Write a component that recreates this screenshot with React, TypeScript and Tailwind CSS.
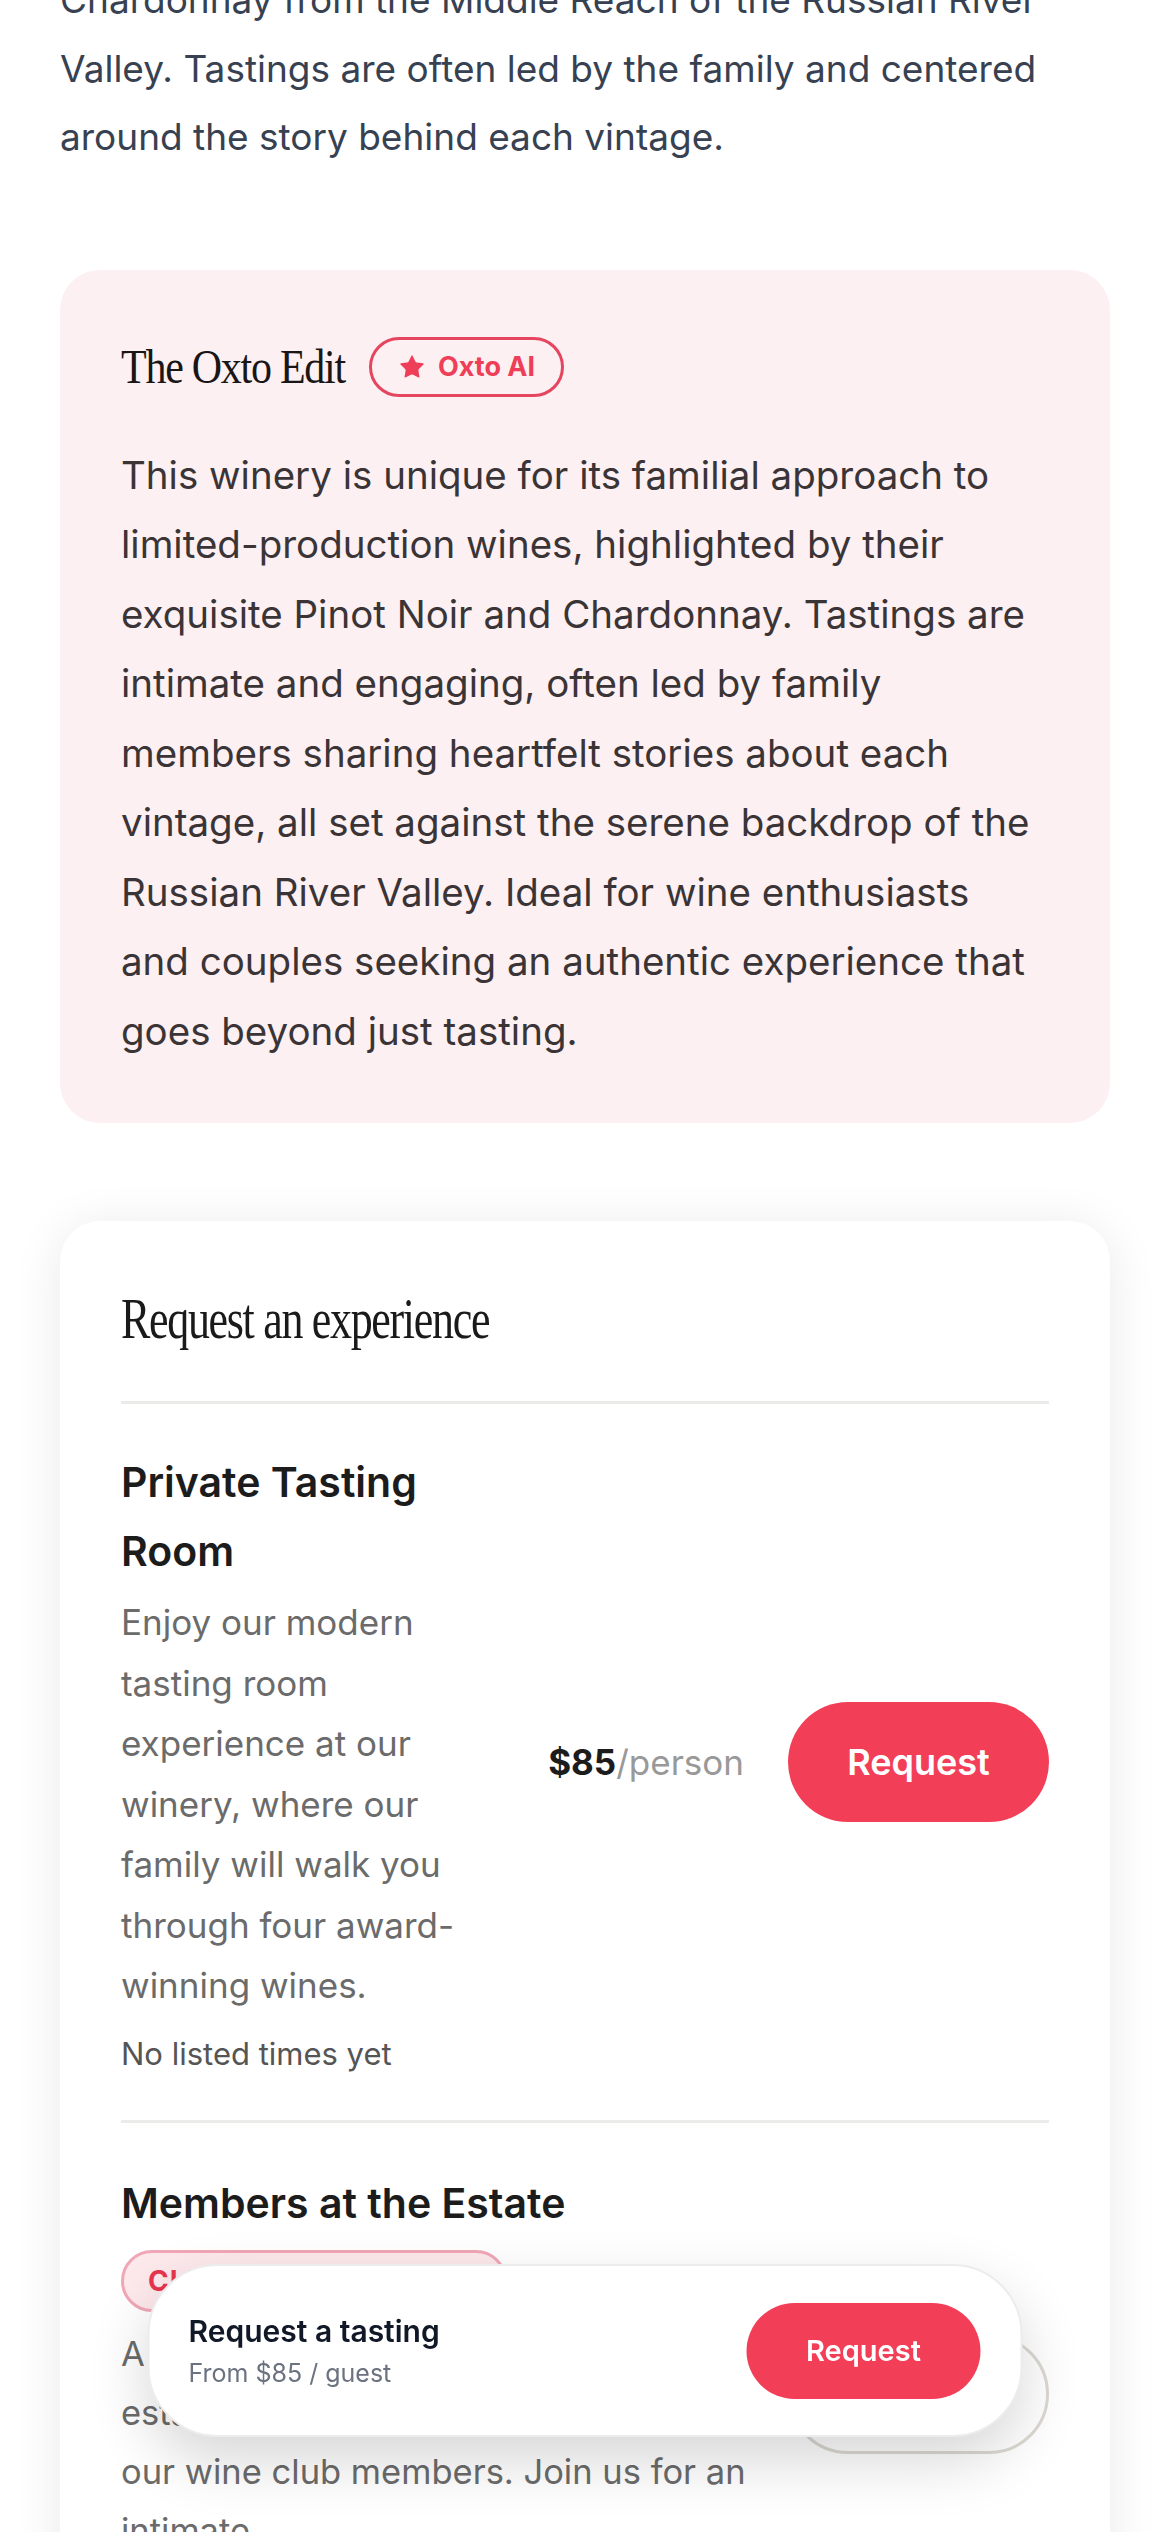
import { Star } from "lucide-react";

function RequestButton({ outline = false }: { outline?: boolean }) {
  return (
    <button
      className={`h-[120px] w-[261px] shrink-0 rounded-full text-[36px] font-semibold ${
        outline
          ? "border-[3px] border-[#dcd8d2] bg-white text-[#1c1c1c]"
          : "bg-[#f23f57] text-white"
      }`}
    >
      Request
    </button>
  );
}

export default function App() {
  return (
    <div className="min-h-[2532px] overflow-hidden bg-white pb-[300px] font-[Inter,'Noto_Sans',sans-serif]">
      {/* About text (scrolled) */}
      <p className="-mt-[34px] px-[60px] text-[37px] leading-[68.6px] text-[#374151]">
        Chardonnay from the Middle Reach of the Russian River Valley. Tastings are often led by the
        family and centered around the story behind each vintage.
      </p>

      {/* The Oxto Edit */}
      <section className="mx-[60px] mt-[98px] rounded-[40px] bg-[#fcf0f2] px-[61px] pb-[57px] pt-[67px]">
        <div className="flex h-[60px] items-center gap-[24px]">
          <h2 className="scale-y-[1.15] font-['Liberation_Serif',serif] text-[42px] leading-[60px] tracking-[-0.03em] text-[#1a1616]">
            The Oxto Edit
          </h2>
          <span className="flex h-[60px] items-center gap-[12px] rounded-full border-[3px] border-[#e5455e] px-[26px] text-[27px] font-bold text-[#ef3e58]">
            <Star size={28} fill="currentColor" strokeWidth={0} />
            Oxto AI
          </span>
        </div>
        <p className="mt-[44px] max-w-[918px] text-[38.5px] leading-[69.5px] text-[#3b3436]">
          This winery is unique for its familial approach to limited-production wines, highlighted by
          their exquisite Pinot Noir and Chardonnay. Tastings are intimate and engaging, often led by
          family members sharing heartfelt stories about each vintage, all set against the serene
          backdrop of the Russian River Valley. Ideal for wine enthusiasts and couples seeking an
          authentic experience that goes beyond just tasting.
        </p>
      </section>

      {/* Request an experience */}
      <section className="mx-[60px] mt-[98px] rounded-[40px] bg-white px-[61px] pt-[69px] shadow-[0_6px_50px_rgba(0,0,0,0.09)]">
        <div className="pb-[51px]">
          <h2 className="scale-y-[1.28] font-['Liberation_Serif',serif] text-[44px] leading-[60px] tracking-[-0.03em] text-[#1a1a1a]">
            Request an experience
          </h2>
        </div>
        <div className="h-[3px] bg-[#ebebe9]" />

        <div className="flex items-center py-[44px]">
          <div className="w-[360px]">
            <h3 className="text-[41px] font-semibold leading-[69px] text-[#1c1c1c]">
              Private Tasting Room
            </h3>
            <p className="mt-[6px] text-[35px] leading-[60.5px] text-[#6b6b6b]">
              Enjoy our modern tasting room experience at our winery, where our family will walk you
              through four award-winning wines.
            </p>
            <p className="mt-[16px] text-[31px] leading-[44px] text-[#555555]">No listed times yet</p>
          </div>
          <div className="ml-auto flex items-center gap-[44px]">
            <p className="text-[35px]">
              <span className="font-bold text-[#1c1c1c]">$85</span>
              <span className="text-[#999999]">/person</span>
            </p>
            <RequestButton />
          </div>
        </div>
        <div className="h-[3px] bg-[#ebebe9]" />

        <div className="flex items-center gap-[12px] py-[46px]">
          <div className="flex-1">
            <h3 className="text-[41px] font-semibold leading-[69px] text-[#1c1c1c]">
              Members at the Estate
            </h3>
            <span className="mt-[12px] inline-flex h-[62px] w-[386px] items-center rounded-full border-[3px] border-[#f0a7b6] bg-[#fde8ec] px-[24px] text-[28px] font-bold tracking-[0.04em] text-[#e8364f]">
              CLUB MEMBERS ONLY
            </span>
            <p className="mt-[12px] text-[34.5px] leading-[59px] text-[#6b6b6b]">
              A private seated tasting on the
              <br />
              estate, in a setting reserved solely for
              <br />
              our wine club members. Join us for an
              <br />
              intimate
              <br />
              afternoon of library wines.
            </p>
          </div>
          <RequestButton outline />
        </div>
      </section>

      {/* Floating request bar */}
      <div className="fixed bottom-[95px] left-1/2 flex h-[173px] w-[875px] -translate-x-1/2 items-center justify-between rounded-[70px] border-[2px] border-[#ececec] bg-white pl-[39px] pr-[40px] shadow-[0_24px_60px_rgba(0,0,0,0.16)]">
        <div>
          <p className="text-[30px] font-semibold leading-[38px] text-[#111827]">Request a tasting</p>
          <p className="mt-[6px] text-[25px] leading-[34px] text-[#6b7280]">From $85 / guest</p>
        </div>
        <button className="h-[96px] w-[234px] rounded-full bg-[#f23f57] text-[29px] font-semibold text-white">
          Request
        </button>
      </div>
    </div>
  );
}
